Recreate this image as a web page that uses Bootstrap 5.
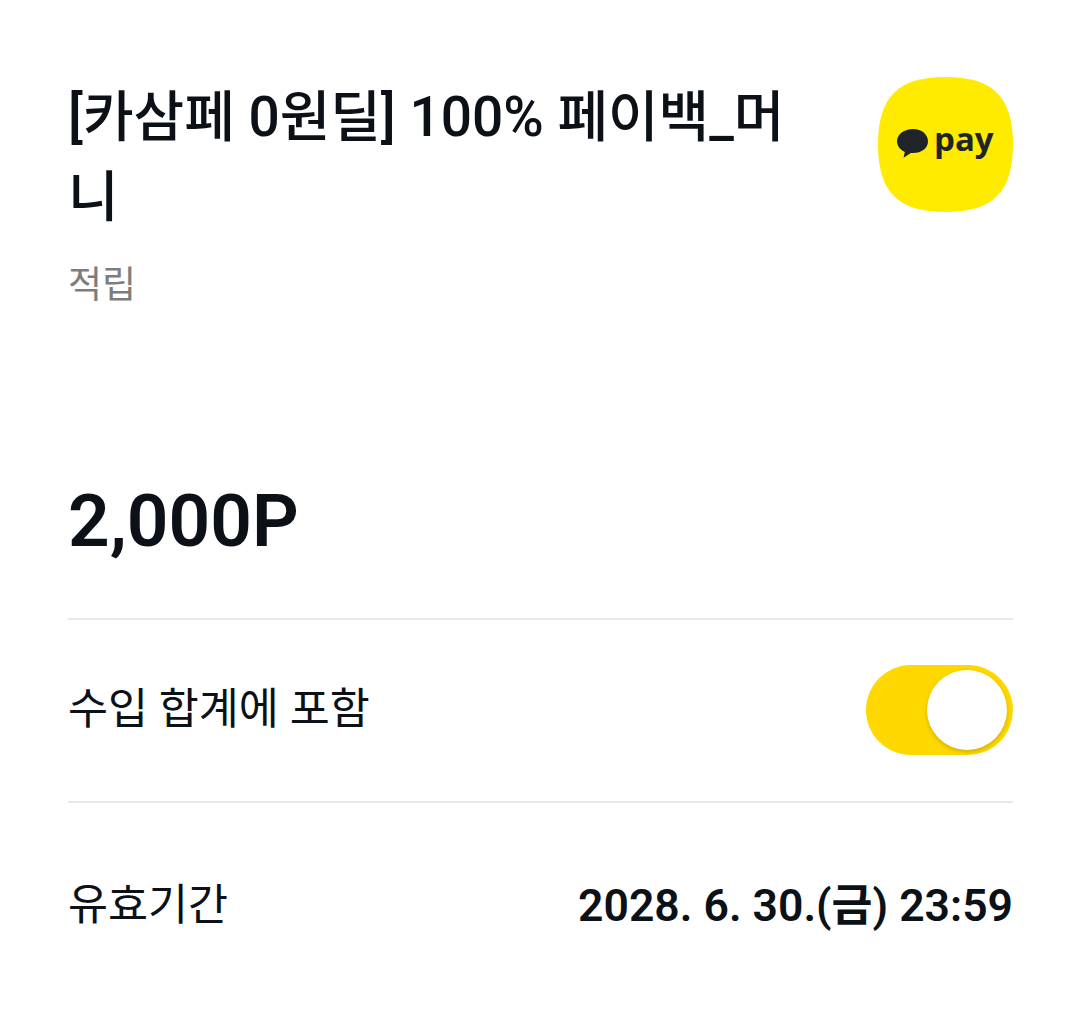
<!DOCTYPE html>
<html lang="ko">
<head>
  <meta charset="UTF-8" />
  <title>적립</title>
  <link href="https://cdn.jsdelivr.net/npm/bootstrap@5.3.2/dist/css/bootstrap.min.css" rel="stylesheet" />
  <script src="https://cdn.jsdelivr.net/npm/bootstrap@5.3.2/dist/js/bootstrap.bundle.min.js"></script>
  <style>
    body { background: #fff; color: #0c1117; font-family: Roboto, "Noto Sans CJK KR", sans-serif; }
    .page-wrap { height: 1015px; padding: 0 67px 0 68px; overflow: hidden; }
    .head-row { padding-top: 77px; height: 478px; }
    .deal-title { font-size: 55px; line-height: 80px; font-weight: 500; width: 730px; }
    .deal-sub { font-size: 37px; line-height: 44px; color: #7d7d7d; margin-top: 27px; }
    .pay-logo { width: 135px; height: 135px; flex: none; }
    .amount { font-size: 73px; line-height: 86px; font-weight: 600; height: 140px; }
    .row-line { border-top: 2px solid #e9e9e9; }
    .toggle-row { height: 183px; font-size: 43.5px; padding-bottom: 1px; }
    .toggle-track { width: 147px; height: 90px; border-radius: 45px; background: #ffd800; padding: 5px 6px; }
    .toggle-knob { width: 80px; height: 80px; border-radius: 50%; background: #fff; box-shadow: 0 2px 4px rgba(120, 100, 0, .35); }
    .date-row { height: 208px; font-size: 43.5px; }
    .date-val { font-weight: 600; font-size: 44.5px; }
  </style>
</head>
<body>
  <div class="page-wrap">
    <div class="head-row d-flex justify-content-between align-items-start">
      <div>
        <div class="deal-title">[카삼페 0원딜] 100% 페이백_머니</div>
        <div class="deal-sub">적립</div>
      </div>
      <svg class="pay-logo" viewBox="0 0 135 135">
        <path d="M67.500 0C115 0 135 20 135 67.500S115 135 67.500 135 0 115 0 67.500 20 0 67.500 0Z" fill="#ffeb00"/>
        <path d="M35 52c-8.800 0-16 5.400-16 12.300 0 4.600 3.100 8.500 7.800 10.600l-1.300 5.800 7.400-4.700c.7.100 1.400.1 2.100.1 8.800 0 15-5 15-11.800S43.800 52 35 52Z" fill="#1f2429"/>
        <text x="56" y="74" font-family="'Open Sans', sans-serif" font-weight="700" font-size="33" fill="#1f2429">pay</text>
      </svg>
    </div>
    <div class="amount">2,000P</div>
    <div class="row-line toggle-row d-flex justify-content-between align-items-center">
      <span>수입 합계에 포함</span>
      <div class="toggle-track d-flex justify-content-end"><div class="toggle-knob"></div></div>
    </div>
    <div class="row-line date-row d-flex justify-content-between align-items-center">
      <span>유효기간</span>
      <span class="date-val">2028. 6. 30.(금) 23:59</span>
    </div>
  </div>
</body>
</html>
